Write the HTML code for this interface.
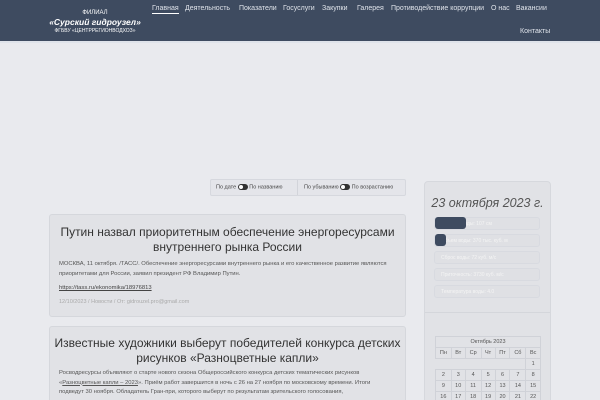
<!DOCTYPE html>
<html><head><meta charset="utf-8"><style>
*{margin:0;padding:0;box-sizing:border-box}
html,body{width:600px;height:400px;overflow:hidden}
body{background:#e9eaee;font-family:"Liberation Sans","DejaVu Sans",sans-serif;position:relative}
.hd{position:absolute;left:0;top:0;width:600px;height:43px;background:#3e4b60;border-bottom:2px solid #dfe3ea}
.logo{position:absolute;left:48px;top:9px;width:94px;text-align:center;color:#fff;line-height:8px}
.logo .a{font-size:6px}.logo .b{font-size:8.5px;font-style:italic;font-weight:bold;line-height:10px}.logo .c{font-size:5px}
.nav{position:absolute;top:5px;left:0;color:#dfe3ea;font-size:7px}
.nav span{position:absolute;white-space:nowrap;top:0}
.sort{position:absolute;left:210px;top:179px;width:196px;height:17px;background:#e4e5ea;border:1px solid #d6d8de;border-radius:2px;font-size:5.5px;color:#444}
.sw{display:inline-block;width:10px;height:6px;border-radius:3px;background:#333;vertical-align:middle;position:relative}
.sw:before{content:"";position:absolute;left:1px;top:1px;width:4px;height:4px;border-radius:2px;background:#fff}
.card{position:absolute;left:49px;width:357px;background:#e1e2e6;border:1px solid #d5d7dc;border-radius:3px}
.card h2{font-weight:normal;font-size:12px;color:#333;text-align:center;line-height:15px;padding:0 4px}
.card p{font-size:5.85px;color:#555;line-height:9.5px;padding:0 9px}
.side{position:absolute;left:424px;top:181px;width:127px;height:230px;background:#e1e2e6;border:1px solid #d6d8dd;border-radius:4px}
.pill{position:absolute;left:434px;width:106px;height:13px;border:1px solid #d8dae0;border-radius:3px;background:#dfe0e4;font-size:5px;color:#f4f4f4;padding:3px 6px}
table{position:absolute;left:435px;top:336px;width:106px;border-collapse:collapse;font-size:5.5px;color:#555;text-align:center}
td{border:1px solid #d0d2d8;height:11px}
</style></head><body>
<div class="hd">
<div class="logo"><div class="a">ФИЛИАЛ</div><div class="b">«Сурский гидроузел»</div><div class="c">ФГБВУ «ЦЕНТРРЕГИОНВОДХОЗ»</div></div>
<div class="nav">
<span style="left:152px;border-bottom:1px solid #fff;padding-bottom:1px">Главная</span>
<span style="left:185px">Деятельность</span>
<span style="left:239px">Показатели</span>
<span style="left:283px">Госуслуги</span>
<span style="left:322px">Закупки</span>
<span style="left:357px">Галерея</span>
<span style="left:391px">Противодействие коррупции</span>
<span style="left:491px">О нас</span>
<span style="left:516px">Вакансии</span>
<span style="left:520px;top:23px">Контакты</span>
</div></div>
<div class="sort"><span style="position:absolute;left:5px;top:4px">По дате <i class="sw"></i> По названию</span><span style="position:absolute;left:86px;top:0;height:15px;border-left:1px solid #d2d4da"></span><span style="position:absolute;left:93px;top:4px">По убыванию <i class="sw"></i> По возрастанию</span></div>
<div class="card" style="top:214px;height:103px">
<h2 style="margin-top:10px">Путин назвал приоритетным обеспечение энергоресурсами внутреннего рынка России</h2>
<p style="margin-top:5px">МОСКВА, 11 октября. /ТАСС/. Обеспечение энергоресурсами внутреннего рынка и его качественное развитие являются приоритетами для России, заявил президент РФ Владимир Путин.</p>
<p style="margin-top:5px;text-decoration:underline;color:#444">https://tass.ru/ekonomika/18976813</p>
<p style="margin-top:4px;color:#aaa;font-size:5.5px">12/10/2023 / Новости / От: gidrouzel.pro@gmail.com</p>
</div>
<div class="card" style="top:326px;height:90px">
<h2 style="margin-top:9px">Известные художники выберут победителей конкурса детских рисунков «Разноцветные капли»</h2>
<p style="margin-top:3px">Росводресурсы объявляют о старте нового сезона Общероссийского конкурса детских тематических рисунков «<u>Разноцветные капли – 2023</u>». Приём работ завершится в ночь с 26 на 27 ноября по московскому времени. Итоги подведут 30 ноября. Обладатель Гран-при, которого выберут по результатам зрительского голосования,</p>
</div>
<div class="side"><div style="position:absolute;left:0;top:130px;width:125px;border-top:1px solid #d4d6db"></div>
<div style="position:absolute;top:14px;width:125px;text-align:center;font-size:12.5px;font-style:italic;color:#555">23 октября 2023 г.</div></div>
<div class="pill" style="top:217px">Уровень воды: 107 см</div>
<div class="pill" style="top:234px">Объем воды: 370 тыс. куб. м</div>
<div class="pill" style="top:251px">Сброс воды: 72 куб. м/с</div>
<div class="pill" style="top:268px">Приточность: 3730 куб. м/с</div>
<div class="pill" style="top:285px">Температура воды: 4.0</div>
<div style="position:absolute;left:435px;top:217px;width:31px;height:12px;background:#3e4b60;border-radius:3px"></div>
<div style="position:absolute;left:435px;top:234px;width:11px;height:12px;background:#3e4b60;border-radius:3px"></div>
<table>
<tr><td colspan="7">Октябрь 2023</td></tr>
<tr><td>Пн</td><td>Вт</td><td>Ср</td><td>Чт</td><td>Пт</td><td>Сб</td><td>Вс</td></tr>
<tr><td colspan="6" style="border:none"></td><td>1</td></tr>
<tr><td>2</td><td>3</td><td>4</td><td>5</td><td>6</td><td>7</td><td>8</td></tr>
<tr><td>9</td><td>10</td><td>11</td><td>12</td><td>13</td><td>14</td><td>15</td></tr>
<tr><td>16</td><td>17</td><td>18</td><td>19</td><td>20</td><td>21</td><td>22</td></tr>
</table>
</body></html>
